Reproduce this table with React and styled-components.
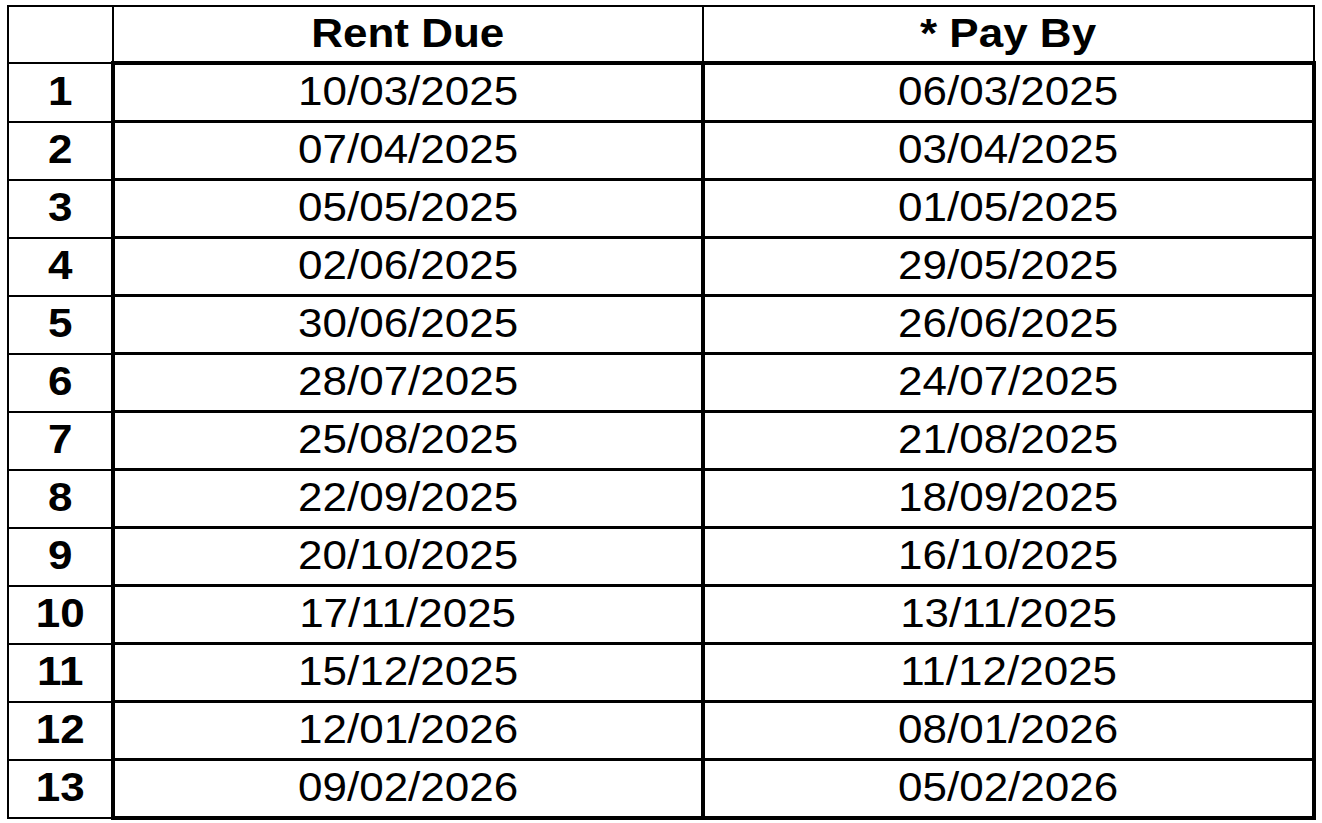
import React from "react";
import styled, { createGlobalStyle } from "styled-components";

const GlobalStyle = createGlobalStyle`
  html, body {
    margin: 0;
    padding: 0;
    background: #ffffff;
  }
  body {
    font-family: "Liberation Sans", Arial, sans-serif;
    color: #000000;
  }
`;

const Page = styled.div`
  padding: 5px 0 0 7px;
`;

const Table = styled.table`
  border-collapse: collapse;
  table-layout: fixed;
  width: 1306px;
`;

const HeadCell = styled.th`
  height: 52px;
  padding: 0 0 2px;
  border: 2px solid #000;
  font-weight: 700;
  font-size: 40px;
  line-height: 1;
  text-align: center;
  vertical-align: middle;
`;

const IndexCell = styled.td`
  height: 52px;
  padding: 0 0 3px;
  border: 2px solid #000;
  font-weight: 700;
  font-size: 40px;
  line-height: 1;
  text-align: center;
  vertical-align: middle;
`;

const DateCell = styled.td`
  height: 52px;
  padding: 0 0 3px;
  border-top: ${(p) => (p.$first ? "4px" : "3px")} solid #000;
  border-bottom: ${(p) => (p.$last ? "4px" : "3px")} solid #000;
  border-left: 4px solid #000;
  border-right: 4px solid #000;
  font-weight: 400;
  font-size: 40px;
  line-height: 1;
  text-align: center;
  vertical-align: middle;
`;

const Stretch = styled.span`
  display: inline-block;
  transform: scaleX(1.1);
  line-height: 1;
`;

const rows = [
  ["10/03/2025", "06/03/2025"],
  ["07/04/2025", "03/04/2025"],
  ["05/05/2025", "01/05/2025"],
  ["02/06/2025", "29/05/2025"],
  ["30/06/2025", "26/06/2025"],
  ["28/07/2025", "24/07/2025"],
  ["25/08/2025", "21/08/2025"],
  ["22/09/2025", "18/09/2025"],
  ["20/10/2025", "16/10/2025"],
  ["17/11/2025", "13/11/2025"],
  ["15/12/2025", "11/12/2025"],
  ["12/01/2026", "08/01/2026"],
  ["09/02/2026", "05/02/2026"],
];

export default function App() {
  return (
    <>
      <GlobalStyle />
      <Page>
        <Table>
          <colgroup>
            <col style={{ width: 105 }} />
            <col style={{ width: 590 }} />
            <col style={{ width: 611 }} />
          </colgroup>
          <thead>
            <tr>
              <HeadCell />
              <HeadCell>
                <Stretch>Rent Due</Stretch>
              </HeadCell>
              <HeadCell>
                <Stretch>* Pay By</Stretch>
              </HeadCell>
            </tr>
          </thead>
          <tbody>
            {rows.map(([due, payBy], i) => (
              <tr key={due}>
                <IndexCell>
                  <Stretch>{i + 1}</Stretch>
                </IndexCell>
                <DateCell $first={i === 0} $last={i === rows.length - 1}>
                  <Stretch>{due}</Stretch>
                </DateCell>
                <DateCell $first={i === 0} $last={i === rows.length - 1}>
                  <Stretch>{payBy}</Stretch>
                </DateCell>
              </tr>
            ))}
          </tbody>
        </Table>
      </Page>
    </>
  );
}
